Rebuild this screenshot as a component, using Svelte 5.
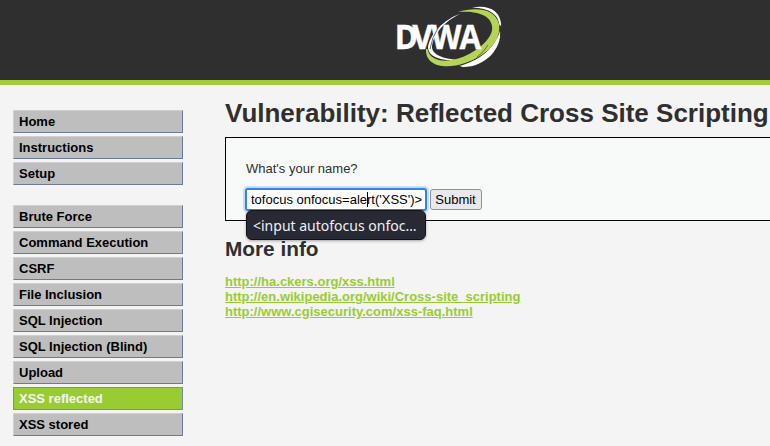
<script>
  const groups = [
    ['Home', 'Instructions', 'Setup'],
    ['Brute Force', 'Command Execution', 'CSRF', 'File Inclusion', 'SQL Injection', 'SQL Injection (Blind)', 'Upload', 'XSS reflected', 'XSS stored']
  ];
  const active = 'XSS reflected';
  const links = [
    'http://ha.ckers.org/xss.html',
    'http://en.wikipedia.org/wiki/Cross-site_scripting',
    'http://www.cgisecurity.com/xss-faq.html'
  ];
</script>

<div class="page">
  <header>
    <svg class="logo" width="112" height="68" viewBox="392 3 112 68" role="img" aria-label="DVWA">
      <path fill="#fff" d="M472 7.500C488 4.500 501 10 501.200 26L499.500 25C498 14 490 8.500 472 7.500Z" />
      <path fill="#fff" d="M500 31C502 48 486 67 463 67L459.500 66C478 61 494 50 500 31Z" />
      <path fill="#fff" d="M461 13.500C444 19 429 35 428 48C428.500 56 440 61.500 457 60C443 58.500 433 55 432 48C432 36 444 21 461 13.500Z" />
      <path fill="#b4d455" d="M458 12C474 7 495 7.500 499 24C502 43 483 57 465 63C445 70 425 66 426 49H427.500C430 62 447 63.500 464 56.500C481 49 494 36 492 26C490 13 472 11 458 12Z" />
      <path fill="none" stroke="#2f2f2f" stroke-width=".6" d="M477 57Q484 52 488 45" />
      <g transform="scale(.92 1)">
        <text x="429 448 468.700 499.500" y="49">DVWA</text>
      </g>
      <path fill="none" stroke="#444450" stroke-width=".8" d="M430 49Q432 37 438 28" />
    </svg>
  </header>
  <div class="columns">
    <nav>
      {#each groups as group}
        <ul>
          {#each group as item}
            <li class:selected={item === active}>{item}</li>
          {/each}
        </ul>
      {/each}
    </nav>
    <main>
      <h1>Vulnerability: Reflected Cross Site Scripting</h1>
      <section>
        <p>What's your name?</p>
        <div class="form">
          <div class="field"><span>tofocus onfocus=alert('XSS')&gt;</span><i class="caret"></i>
            <div class="suggest">&lt;input autofocus onfoc…</div>
          </div>
          <button type="button">Submit</button>
        </div>
      </section>
      <h2>More info</h2>
      <div class="links">
        {#each links as link}
          <a href={link}>{link}</a>
        {/each}
      </div>
    </main>
  </div>
</div>

<style>
  :global(body) { margin: 0; background: #f4f4f4; }
  .page {
    width: 100%;
    height: 446px;
    overflow: hidden;
    background: #f4f4f4;
    color: #2f2f2f;
    font: 13px/15px "Liberation Sans", Arial, sans-serif;
  }
  header {
    box-sizing: border-box;
    height: 85px;
    padding: 3px 0 0 392px;
    background: #2f2f2f;
    border-bottom: 5px solid #a1cc33;
  }
  .logo { display: block; }
  .logo text {
    font: 700 34px "Open Sans", "Noto Sans", sans-serif;
    fill: #fff;
    stroke: #fff;
    stroke-width: .4px;
  }
  .columns { display: flex; }
  nav { width: 170px; padding: 25px 0 0 13px; flex: none; }
  ul { list-style: none; margin: 0 0 20px; padding: 0; }
  li {
    box-sizing: border-box;
    height: 23px;
    margin-bottom: 3px;
    padding: 3px 5px;
    border: 1px solid;
    border-color: #d0d0d0 #6b7a99 #6b7a99 #d0d0d0;
    background: #bebebe;
    color: #000;
    font-weight: bold;
  }
  li.selected { background: #9c3; border-color: #7090a8; color: #f4f4f4; }
  main { flex: none; width: 600px; padding-left: 42px; }
  h1 { margin: 13px 0 9px; font-size: 26px; line-height: 30px; white-space: nowrap; }
  section {
    box-sizing: border-box;
    height: 84px;
    padding: 23px 20px 0;
    border: 1px solid #000;
    background: #f8fafa;
  }
  p { margin: 0 0 12px; }
  .form { display: flex; align-items: center; gap: 3px; margin-left: -1px; }
  .field {
    position: relative;
    box-sizing: border-box;
    width: 182px;
    height: 23px;
    padding: 2px 4px;
    border: 2px solid #3584e4;
    border-radius: 3px;
    box-shadow: 0 0 0 2px #c5def8;
    background: #fff;
    color: #000;
    white-space: nowrap;
  }
  .caret { position: absolute; left: 120px; top: 2px; width: 1px; height: 15px; background: #000; }
  .suggest {
    position: absolute;
    left: -1px;
    top: 20px;
    box-sizing: border-box;
    width: 180px;
    height: 30px;
    padding: 0 6px;
    border: 1px solid #111219;
    border-radius: 6px;
    background: #272935;
    box-shadow: 0 1px 3px #0005;
    color: #f0f0f2;
    font: 14px/29px "Noto Sans", sans-serif;
  }
  button {
    box-sizing: border-box;
    width: 52px;
    height: 21px;
    padding: 0 1px 0 0;
    border: 1px solid #8f8f9d;
    border-radius: 3px;
    background: #e9e9ed;
    color: #000;
    font: 13px/15px "Liberation Sans", Arial, sans-serif;
  }
  h2 { margin: 16px 0 13px; font-size: 20.8px; line-height: 24px; }
  .links { display: flex; flex-direction: column; align-items: flex-start; }
  a { color: #9c3; font-weight: bold; text-decoration: underline; }
</style>
